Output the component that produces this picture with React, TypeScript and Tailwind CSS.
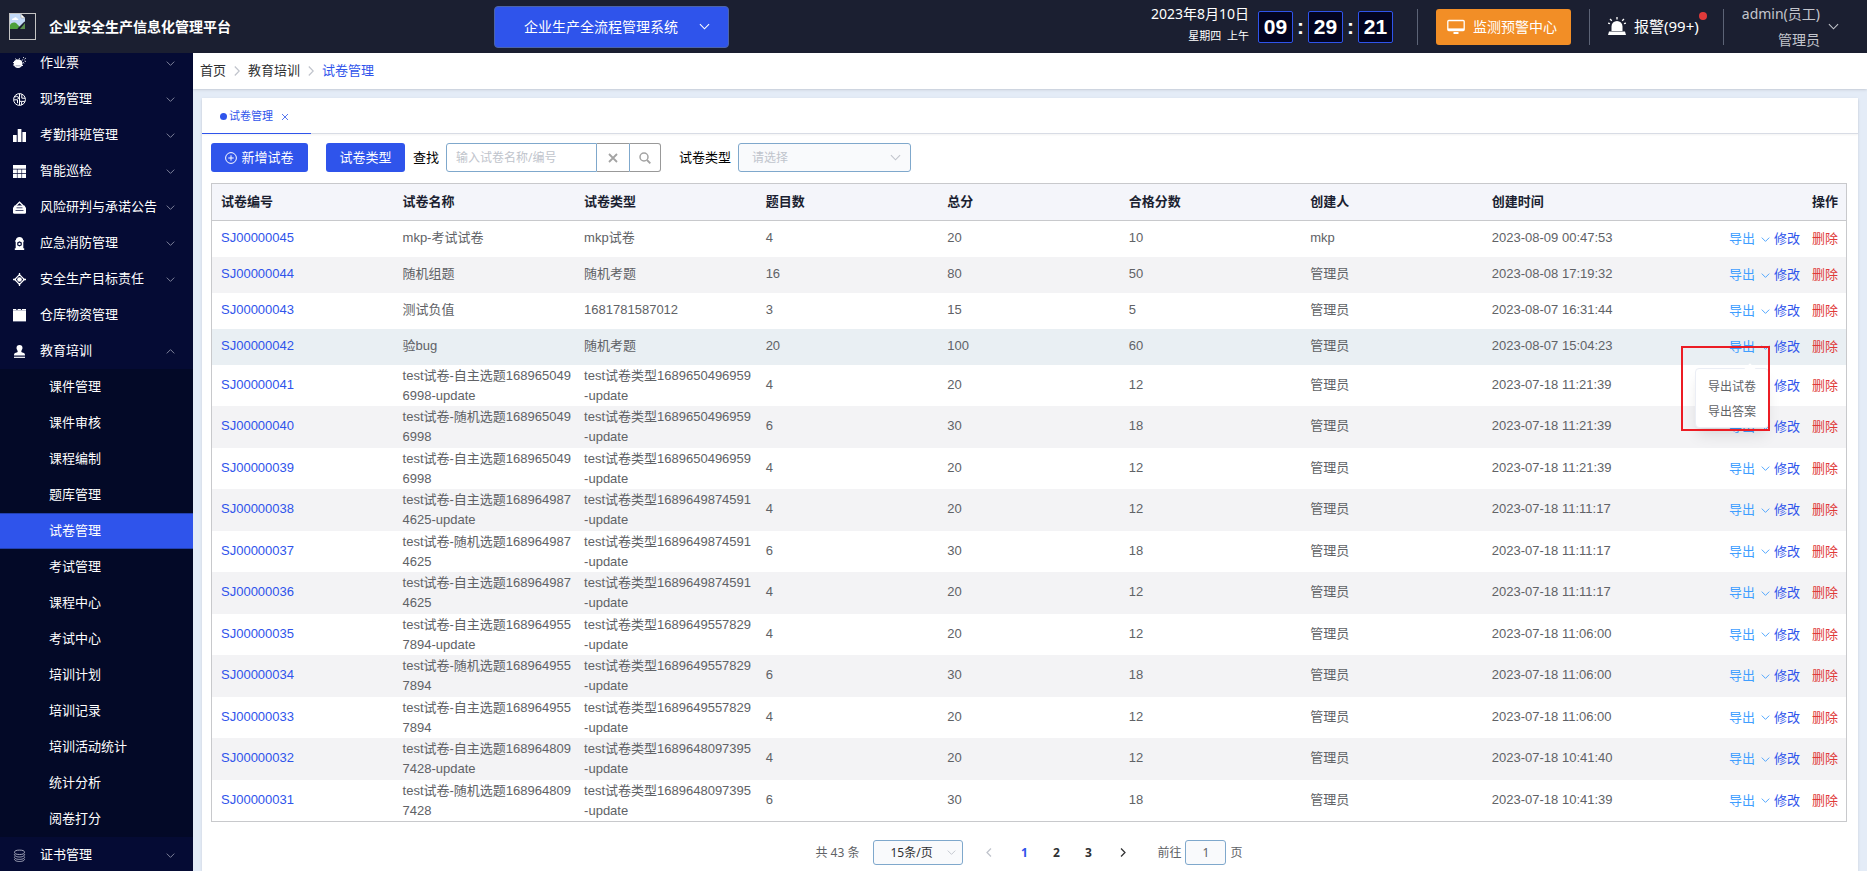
import type { ReactNode } from "react";
import { clsx } from "clsx";

type IconName =
  | "ticket"
  | "site"
  | "bars"
  | "grid"
  | "risk"
  | "hydrant"
  | "target"
  | "box"
  | "stamp"
  | "coins";

const ICONS: Record<IconName, ReactNode> = {
  ticket: (
    <>
      <path d="M1 4.2C2 3 3.4 2.4 5 2.4c1.700 0 3.100.7 3.900 1.900l.6 2.200c0 2.600-2 4.500-4.500 4.500S1 9.400.8 7z" fill="#fff" />
      <path d="M0 5.500h1.500M0 8h1.500M8.500 8.500H10M2.500 1.500l1 1.500M6.500 1.200l-.5 1.600" stroke="#fff" strokeWidth=".9" />
      <path d="M8.600 3.800l1.600-1.400M10.200 1l.6-1M11.500 2.200L13 1M11.500 4l1.500.5M10 5l1 1.500" stroke="#fff" strokeWidth=".8" />
      <path d="M2.500 8.800h5" stroke="#8d90a8" strokeWidth=".8" />
    </>
  ),
  site: (
    <g fill="none" stroke="#fff" strokeWidth="1">
      <circle cx="6.500" cy="6.500" r="5.900" />
      <path d="M6.500.6v4.200L3.200 3M6.500 4.800v7.500M.8 6.800h3.700v3.400M8.800 1.200v4h3.200M8.600 12V8.400h3.200M3.200 3L1.800 4.600" />
      <path d="M4.500 5.300h2M6.500 8.300h2" />
    </g>
  ),
  bars: <path d="M0 6h3.700v7H0zM4.700 0h3.700v13H4.700zM9.400 3H13v10H9.400z" fill="#fff" />,
  grid: (
    <path
      d="M0 0h13v3.800H0zM0 4.400h3.900v3.900H0zM4.500 4.400h4v3.900h-4zM9.100 4.400H13v3.900H9.100zM0 8.900h3.900V13H0zM4.500 8.900h4V13h-4zM9.100 8.900H13V13H9.100z"
      fill="#fff"
    />
  ),
  risk: (
    <>
      <path d="M2.600 5L6.500 1.200 10.400 5" fill="none" stroke="#fff" strokeWidth="1.300" />
      <path d="M1.500 4.500h10L13 7v4.500c0 .8-.5 1.200-1.200 1.200H1.200C.5 12.700 0 12.300 0 11.500V7z" fill="#fff" />
      <path d="M3.500 6.800h6M2.500 9.500h8" stroke="#4d5275" strokeWidth="1" />
    </>
  ),
  hydrant: (
    <>
      <path d="M6.500 0c2.200 0 3.700 1.400 3.700 3.200h.6v1.500h-.5v6.500h.9V13H1.800v-1.800h.9V4.700h-.5V3.200h.6C2.800 1.400 4.300 0 6.500 0z" fill="#fff" />
      <path d="M6.500 4.300l2.300 1.300v2.600L6.500 9.500 4.200 8.200V5.600z" fill="#050b34" />
      <circle cx="6.500" cy="6.900" r="1.200" fill="#fff" />
    </>
  ),
  target: (
    <>
      <path d="M6.500 1.700l4.800 4.800-4.800 4.800-4.800-4.800z" fill="none" stroke="#fff" strokeWidth="1.200" />
      <path d="M6.500 0v3M6.500 10v3M0 6.500h3M10 6.500h3" stroke="#fff" strokeWidth="1.300" />
      <circle cx="6.500" cy="6.500" r="2.300" fill="#fff" />
    </>
  ),
  box: (
    <>
      <path d="M0 0h3.300v1H4.600V0h3.300v1h1V0H13v12H0z" fill="#fff" />
      <path d="M0 1.500h13" stroke="#8d90a8" strokeWidth=".5" />
      <path d="M0 12.600h13" stroke="#8d90a8" strokeWidth=".8" />
    </>
  ),
  stamp: (
    <>
      <path d="M6.500 0a3 3 0 0 1 3 3c0 1.500-1.200 2.200-1.200 3.600 0 .8.6 1 1.800 1.200 1.300.2 1.900.9 1.900 2.700H1c0-1.800.6-2.500 1.900-2.700C4.100 7.600 4.700 7.400 4.700 6.600 4.700 5.200 3.500 4.500 3.500 3a3 3 0 0 1 3-3z" fill="#fff" />
      <path d="M1 12.300h11" stroke="#fff" strokeWidth="1.200" />
    </>
  ),
  coins: (
    <g fill="none" stroke="#b4b7c8" strokeWidth=".9">
      <ellipse cx="6.500" cy="3.300" rx="5" ry="2.200" />
      <path d="M1.500 5c-.6 1.700 2 3 5 3s5.600-1.300 5-3M1.500 7.600c-.6 1.700 2 2.800 5 2.800s5.600-1.100 5-2.800M1.500 9.900c-.4 1.500 2 2.600 5 2.600s5.400-1.100 5-2.600" />
    </g>
  ),
};

interface MenuItem {
  icon: IconName;
  label: string;
  arrow?: "down" | "up";
}

const MENU: MenuItem[] = [
  { icon: "ticket", label: "作业票", arrow: "down" },
  { icon: "site", label: "现场管理", arrow: "down" },
  { icon: "bars", label: "考勤排班管理", arrow: "down" },
  { icon: "grid", label: "智能巡检", arrow: "down" },
  { icon: "risk", label: "风险研判与承诺公告", arrow: "down" },
  { icon: "hydrant", label: "应急消防管理", arrow: "down" },
  { icon: "target", label: "安全生产目标责任", arrow: "down" },
  { icon: "box", label: "仓库物资管理" },
  { icon: "stamp", label: "教育培训", arrow: "up" },
];

const SUBMENU = [
  "课件管理",
  "课件审核",
  "课程编制",
  "题库管理",
  "试卷管理",
  "考试管理",
  "课程中心",
  "考试中心",
  "培训计划",
  "培训记录",
  "培训活动统计",
  "统计分析",
  "阅卷打分",
];

const COLUMNS = ["试卷编号", "试卷名称", "试卷类型", "题目数", "总分", "合格分数", "创建人", "创建时间"];

const ROWS = [
  ["SJ00000045", "mkp-考试试卷", "mkp试卷", "4", "20", "10", "mkp", "2023-08-09 00:47:53"],
  ["SJ00000044", "随机组题", "随机考题", "16", "80", "50", "管理员", "2023-08-08 17:19:32"],
  ["SJ00000043", "测试负值", "1681781587012", "3", "15", "5", "管理员", "2023-08-07 16:31:44"],
  ["SJ00000042", "验bug", "随机考题", "20", "100", "60", "管理员", "2023-08-07 15:04:23"],
  ["SJ00000041", "test试卷-自主选题1689650496998-update", "test试卷类型1689650496959-update", "4", "20", "12", "管理员", "2023-07-18 11:21:39"],
  ["SJ00000040", "test试卷-随机选题1689650496998", "test试卷类型1689650496959-update", "6", "30", "18", "管理员", "2023-07-18 11:21:39"],
  ["SJ00000039", "test试卷-自主选题1689650496998", "test试卷类型1689650496959-update", "4", "20", "12", "管理员", "2023-07-18 11:21:39"],
  ["SJ00000038", "test试卷-自主选题1689649874625-update", "test试卷类型1689649874591-update", "4", "20", "12", "管理员", "2023-07-18 11:11:17"],
  ["SJ00000037", "test试卷-随机选题1689649874625", "test试卷类型1689649874591-update", "6", "30", "18", "管理员", "2023-07-18 11:11:17"],
  ["SJ00000036", "test试卷-自主选题1689649874625", "test试卷类型1689649874591-update", "4", "20", "12", "管理员", "2023-07-18 11:11:17"],
  ["SJ00000035", "test试卷-自主选题1689649557894-update", "test试卷类型1689649557829-update", "4", "20", "12", "管理员", "2023-07-18 11:06:00"],
  ["SJ00000034", "test试卷-随机选题1689649557894", "test试卷类型1689649557829-update", "6", "30", "18", "管理员", "2023-07-18 11:06:00"],
  ["SJ00000033", "test试卷-自主选题1689649557894", "test试卷类型1689649557829-update", "4", "20", "12", "管理员", "2023-07-18 11:06:00"],
  ["SJ00000032", "test试卷-自主选题1689648097428-update", "test试卷类型1689648097395-update", "4", "20", "12", "管理员", "2023-07-18 10:41:40"],
  ["SJ00000031", "test试卷-随机选题1689648097428", "test试卷类型1689648097395-update", "6", "30", "18", "管理员", "2023-07-18 10:41:39"],
];

const OPEN_ROW = "SJ00000042";

function Chevron({ className, flip }: { className?: string; flip?: boolean }) {
  return (
    <svg viewBox="0 0 12 12" fill="none" stroke="currentColor" strokeWidth="1.200" className={clsx("shrink-0", className)}>
      <path d={flip ? "M1 8.500l5-5 5 5" : "M1 3.500l5 5 5-5"} />
    </svg>
  );
}

function MenuRow({ icon, label, arrow }: MenuItem) {
  return (
    <li>
      <a href="#" className="flex h-9 items-center pr-[18px] pl-[13px] text-white">
        <svg viewBox="0 0 13 13" className="size-[13px] shrink-0">
          {ICONS[icon]}
        </svg>
        <span className="ml-3.5 flex-1 whitespace-nowrap">{label}</span>
        {arrow && <Chevron flip={arrow === "up"} className="size-[9px] text-[#8b8fa6]" />}
      </a>
    </li>
  );
}

function Sidebar() {
  return (
    <nav className="w-[193px] shrink-0 overflow-hidden bg-[#050b34] text-[13px]">
      <ul className="-mt-2">
        {MENU.map((item) => (
          <MenuRow key={item.label} {...item} />
        ))}
        <li>
          <ul className="bg-[#030927]">
            {SUBMENU.map((label) => (
              <li key={label}>
                <a
                  href="#"
                  className={clsx(
                    "flex h-9 items-center pl-[49px] text-white",
                    label === "试卷管理" && "border-y border-[#2240b0] bg-[#2f54eb]",
                  )}
                >
                  {label}
                </a>
              </li>
            ))}
          </ul>
        </li>
        <MenuRow icon="coins" label="证书管理" arrow="down" />
      </ul>
    </nav>
  );
}

function ClockBox({ value }: { value: string }) {
  return (
    <span className="flex h-8 w-[35px] items-center justify-center rounded-xs border border-[#2f54eb] bg-[#020420]">
      {value}
    </span>
  );
}

function Header() {
  return (
    <header className="flex h-[53px] shrink-0 items-center bg-[#1b1f31] text-sm text-white">
      <div className="flex w-[494px] items-center pl-[9px]">
        <span className="size-[27px] border border-[#c4c4c4]">
          <svg viewBox="0 0 16 16" className="size-4">
            <path d="M0 0h11l4 4v5l-4 3-3 3H0z" fill="#c3d9f7" />
            <path d="M11 0v4h4z" fill="#fff" stroke="#9a9a9a" strokeWidth=".6" />
            <path d="M2 6c0-1.500 1-2 2-1.800C4.500 3 6.500 3 7 4.500c1 0 1.500.7 1.300 1.500z" fill="#fff" />
            <path d="M0 15v-4c2-3 5-3 7-1l3 3-2 2z" fill="#4da13c" />
            <path d="M15 9v6h-5z" fill="#5b8f4e" />
            <path d="M8 15l7-7" stroke="#1b1f31" strokeWidth="1.500" />
          </svg>
        </span>
        <h1 className="ml-[13px] font-bold">企业安全生产信息化管理平台</h1>
      </div>

      <button className="flex h-[42px] w-[235px] items-center rounded-[4px] border border-[#4c64a8] bg-[#2f54eb] pl-[29px]">
        <span>企业生产全流程管理系统</span>
        <Chevron className="ml-[21px] size-[11px]" />
      </button>

      <div className="flex h-full flex-1 items-center justify-end pr-7">
        <div className="flex flex-col items-end pb-[3px]">
          <span className="leading-[22px]">2023年8月10日</span>
          <span className="text-[11px] leading-[22px]">星期四&nbsp; 上午</span>
        </div>
        <div className="ml-[9px] flex items-center font-['Liberation_Sans',sans-serif] text-[21px] font-bold">
          <ClockBox value="09" />
          <span className="w-[15px] text-center">:</span>
          <ClockBox value="29" />
          <span className="w-[15px] text-center">:</span>
          <ClockBox value="21" />
        </div>
        <span className="ml-6 h-9 w-px bg-[#5c6376]" />
        <button className="ml-[18px] flex h-9 w-[135px] items-center gap-2 rounded-[3px] bg-[#f28e26] pl-[11px]">
          <svg viewBox="0 0 18 16" className="h-4 w-[18px]" fill="none" stroke="#fff">
            <rect x=".8" y="1.500" width="16.400" height="10" rx="1" strokeWidth="1.300" />
            <path d="M1 10.500h16" strokeWidth="2.200" />
            <path d="M6.500 14h5" strokeWidth="2" />
          </svg>
          <span>监测预警中心</span>
        </button>
        <span className="ml-[18px] h-9 w-px bg-[#5c6376]" />
        <a href="#" className="relative ml-[18px] flex items-center gap-2 text-[15px]">
          <svg viewBox="0 0 18 18" className="size-[18px]" fill="#fff">
            <path d="M3.500 14V9.500a5.500 5.500 0 0 1 11 0V14z" />
            <path d="M1 14.500h16l1 3.500H0z" />
            <path d="M9 0v2.500M2 2l1.800 1.800M16 2l-1.800 1.800M0 6l2 .7M18 6l-2 .7" stroke="#fff" strokeWidth="1.300" />
          </svg>
          <span>报警(99+)</span>
          <span className="absolute -top-1 -right-2 size-2 rounded-full bg-[#e03a3a]" />
        </a>
        <span className="ml-6 h-9 w-px bg-[#5c6376]" />
        <button className="ml-[18px] flex items-center gap-2 text-[#c3c5cc]">
          <span className="text-right leading-[26px]">
            admin(员工)
            <br />
            管理员
          </span>
          <Chevron className="size-[11px]" />
        </button>
      </div>
    </header>
  );
}

function Breadcrumb() {
  const sep = (
    <svg viewBox="0 0 6 10" className="h-2.5 w-1.5" fill="none" stroke="#c0c4cc" strokeWidth="1.200">
      <path d="M.8.5L5.200 5 .8 9.500" />
    </svg>
  );
  return (
    <nav className="flex h-9 shrink-0 items-center gap-2 bg-white px-[7px] text-[13px] text-[#303133] shadow-sm">
      <a href="#">首页</a>
      {sep}
      <a href="#">教育培训</a>
      {sep}
      <a href="#" className="text-[#2f54eb]">试卷管理</a>
    </nav>
  );
}

function Toolbar() {
  return (
    <div className="flex h-[29px] items-center text-[13px] text-black">
      <button className="flex h-full w-[97px] items-center justify-center gap-1 rounded-[3px] bg-[#2f54eb] text-white">
        <svg viewBox="0 0 12 12" className="size-3" fill="none" stroke="#fff">
          <circle cx="6" cy="6" r="5.400" />
          <path d="M6 3.300v5.400M3.300 6h5.400" />
        </svg>
        新增试卷
      </button>
      <button className="ml-[18px] h-full w-[79px] rounded-[3px] bg-[#2f54eb] text-white">试卷类型</button>
      <label htmlFor="keyword" className="ml-2">查找</label>
      <div className="ml-[7px] flex h-full">
        <input
          id="keyword"
          placeholder="输入试卷名称/编号"
          className="w-[151px] rounded-l-[3px] border border-[#7fa8cc] px-[9px] text-xs outline-none placeholder:text-[#c0c4cc]"
        />
        <button aria-label="清空" className="flex w-8 items-center justify-center border-y border-[#999]">
          <svg viewBox="0 0 10 10" className="size-2.5" stroke="#a3a3a3" strokeWidth="1.800">
            <path d="M1 1l8 8M9 1L1 9" />
          </svg>
        </button>
        <button
          aria-label="搜索"
          className="flex w-8 items-center justify-center rounded-r-[3px] border border-[#999] border-l-[#7fa8cc]"
        >
          <svg viewBox="0 0 12 12" className="size-3" fill="none" stroke="#a3a3a3" strokeWidth="1.500">
            <circle cx="5" cy="5" r="4" />
            <path d="M8 8l3.300 3.300" strokeWidth="1.800" />
          </svg>
        </button>
      </div>
      <label htmlFor="type" className="ml-[18px]">试卷类型</label>
      <div className="relative ml-[7px] h-full">
        <select
          id="type"
          className="h-full w-[173px] appearance-none rounded-[3px] border border-[#7fa8cc] bg-[#f9fafc] pl-[13px] text-xs text-[#c0c4cc]"
        >
          <option>请选择</option>
        </select>
        <Chevron className="pointer-events-none absolute top-[9px] right-2.5 size-[11px] text-[#c0c4cc]" />
      </div>
    </div>
  );
}

function ExportMenu() {
  return (
    <>
      <ul className="absolute top-[39px] right-[77px] z-10 w-[74px] rounded-[4px] border border-[#ebeef5] bg-white pt-1.5 pb-0.5 pl-3 text-xs leading-[25px] text-[#606266] shadow-lg">
        <li className="absolute -top-1 right-3.5 size-2 rotate-45 bg-white" aria-hidden="true" />
        <li className="relative">导出试卷</li>
        <li className="relative">导出答案</li>
      </ul>
      <span className="absolute top-[17px] right-[76px] z-20 h-[85px] w-[89px] border-2 border-[#ec1c24]" />
    </>
  );
}

function PaperTable() {
  return (
    <table className="mt-[11px] w-full table-fixed border-separate border-spacing-0 border border-[#c8c9cc] font-['Liberation_Sans','Noto_Sans_CJK_SC',sans-serif] text-[13px] leading-5 text-[#606266]">
      <thead>
        <tr className="h-[37px] bg-[#f4f5fa] text-left text-[#1b1f31]">
          {COLUMNS.map((c) => (
            <th key={c} className="border-b border-[#c8c9cc] py-0 pl-[9px] font-bold">{c}</th>
          ))}
          <th className="border-b border-[#c8c9cc] py-0 pr-2 text-right font-bold">操作</th>
        </tr>
      </thead>
      <tbody>
        {ROWS.map((row, i) => {
          const tall = row[2].endsWith("-update");
          const open = row[0] === OPEN_ROW;
          return (
            <tr
              key={row[0]}
              className={clsx(
                open ? "bg-[#e9eff3]" : i % 2 ? "bg-[#f3f3f5]" : "bg-white",
                !tall ? "h-9" : i % 2 ? "h-[42px]" : "h-[41px]",
              )}
            >
              {row.map((cell, j) => (
                <td key={j} className={clsx("pt-0 pr-[3px] pl-[9px] break-all", tall && (j === 1 || j === 2) ? "pb-0" : "pb-0.5")}>
                  {j === 0 ? <a href="#" className="text-[#2f54eb]">{cell}</a> : cell}
                </td>
              ))}
              <td className="relative py-0 pr-2">
                <div className="flex items-center justify-end">
                  <button className="flex items-center gap-1.5 text-[#409eff]">
                    导出
                    <Chevron className="size-[9px]" />
                  </button>
                  <button className="ml-1 text-[#2f54eb]">修改</button>
                  <button className="ml-3 text-[#e03a3a]">删除</button>
                </div>
                {open && <ExportMenu />}
              </td>
            </tr>
          );
        })}
      </tbody>
    </table>
  );
}

function Pagination() {
  return (
    <div className="mt-[18px] flex h-[25px] items-center justify-center text-xs text-[#606266]">
      <span>共 43 条</span>
      <div className="relative ml-3.5 h-full">
        <select
          aria-label="每页条数"
          className="h-full w-[90px] appearance-none rounded-[3px] border border-[#7fa8cc] bg-[#f9fafc] pl-4 text-[#303133]"
        >
          <option>15条/页</option>
        </select>
        <Chevron className="pointer-events-none absolute top-2 right-[7px] size-[9px] text-[#c0c4cc]" />
      </div>
      <button aria-label="上一页" className="ml-[10px] flex w-8 justify-center text-[#c0c4cc]">
        <svg viewBox="0 0 6 10" className="h-[9px] w-1.5" fill="none" stroke="currentColor" strokeWidth="1.400">
          <path d="M5.200.6L.8 5l4.400 4.400" />
        </svg>
      </button>
      <div className="ml-[3px] flex font-bold text-[#303133]">
        <button className="w-8 text-[#2f54eb]">1</button>
        <button className="w-8">2</button>
        <button className="w-8">3</button>
      </div>
      <button aria-label="下一页" className="ml-[3px] flex w-8 justify-center text-[#303133]">
        <svg viewBox="0 0 6 10" className="h-[9px] w-1.5" fill="none" stroke="currentColor" strokeWidth="1.400">
          <path d="M.8.6L5.200 5 .8 9.400" />
        </svg>
      </button>
      <label htmlFor="page" className="ml-[18px]">前往</label>
      <input
        id="page"
        defaultValue="1"
        className="mx-1 h-full w-[41px] rounded-[3px] border border-[#7fa8cc] bg-[#f9fafc] text-center outline-none"
      />
      <span>页</span>
    </div>
  );
}

export default function App() {
  return (
    <div className="flex h-screen flex-col overflow-hidden font-['Noto_Sans','Noto_Sans_CJK_SC',sans-serif]">
      <Header />
      <div className="flex min-h-0 flex-1">
        <Sidebar />
        <main className="flex min-w-0 flex-1 flex-col bg-[#e4ecf7]">
          <Breadcrumb />
          <section className="mx-[9px] mt-[9px] flex-1 bg-white shadow-sm">
            <div className="flex h-9 border-b border-[#d8dce5] shadow-xs">
              <div className="-mb-px flex w-[109px] items-center border-b border-[#2f54eb] pt-0.5 pl-[18px] text-[11px] text-[#2f54eb]">
                <span className="mr-0.5 size-[7px] rounded-full bg-[#2f54eb]" />
                <a href="#">试卷管理</a>
                <button aria-label="关闭" className="ml-2">
                  <svg viewBox="0 0 8 8" className="size-2" stroke="#2f54eb" strokeWidth=".8">
                    <path d="M1 1l6 6M7 1L1 7" />
                  </svg>
                </button>
              </div>
            </div>
            <div className="pt-[9px] pr-[11px] pl-[9px]">
              <Toolbar />
              <PaperTable />
              <Pagination />
            </div>
          </section>
        </main>
      </div>
    </div>
  );
}
